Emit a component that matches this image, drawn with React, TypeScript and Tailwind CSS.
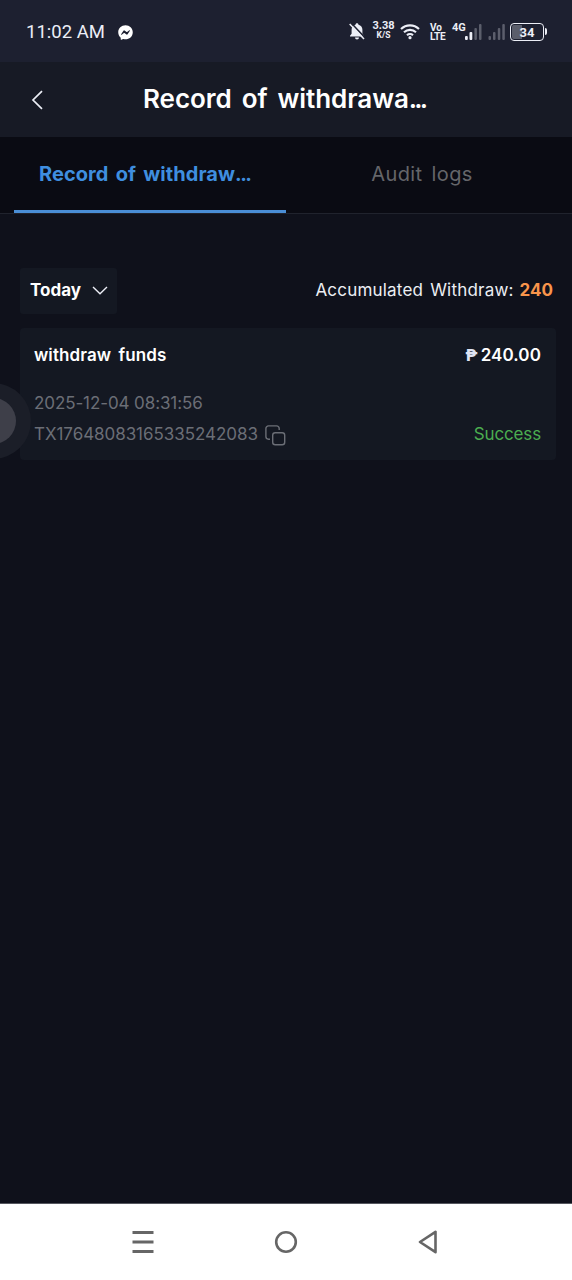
import { FaFacebookMessenger } from 'react-icons/fa';

const tabs = [
  { label: 'Record of withdraw', truncated: true, active: true },
  { label: 'Audit logs', truncated: false, active: false },
];

const records = [
  {
    title: 'withdraw funds',
    amount: '240.00',
    time: '2025-12-04 08:31:56',
    id: 'TX17648083165335242083',
    status: 'Success',
  },
];

const StatusBar = () => (
  <div className="h-[62px] bg-[#1d2030] flex items-start justify-between pl-[26px] pr-[25px] text-[#eceef6] font-['Roboto',sans-serif]">
    <div className="flex items-center h-[64px]">
      <span className="text-[18.5px] w-[92px] whitespace-nowrap pt-[2px]">11:02 AM</span>
      <FaFacebookMessenger className="w-[15px] h-[15px] text-white" />
    </div>

    <div className="flex items-center h-[63px]">
      {/* Muted bell */}
      <svg className="w-[16px] h-[17px] mr-[7px]" viewBox="0 0 16 17">
        <path d="M8 0.300c.9 0 1.500.6 1.500 1.500 2.500.6 3.900 2.500 3.900 4.900v4.100l1.600 1.900v.9H1v-.9l1.600-1.900V6.700c0-2.400 1.400-4.300 3.900-4.900C6.500.9 7.100.3 8 .3zM6 14.400h4a2 2 0 0 1-4 0z" fill="currentColor" />
        <path d="M1.900 -.3L16.200 14.900" stroke="#1d2030" strokeWidth="1.500" />
        <path d="M.7.9l14.300 15.200" stroke="currentColor" strokeWidth="1.500" />
      </svg>
      <div className="w-[23px] mr-[5px] mb-[2px] flex flex-col items-center font-bold">
        <span className="text-[11px] leading-[10px]">3.38</span>
        <span className="text-[8.5px] leading-[9px]">K/S</span>
      </div>
      {/* Wifi */}
      <svg className="w-[20px] h-[17px] mr-[10px]" viewBox="0 0 20 17" fill="none" stroke="currentColor" strokeWidth="2.100">
        <path d="M1 6.100a12.800 12.800 0 0 1 18 0" />
        <path d="M4 9.300a8.600 8.600 0 0 1 12 0" />
        <path d="M7 12.300a4.400 4.400 0 0 1 6 0" />
        <circle cx="10" cy="14.700" r="1.600" fill="currentColor" stroke="none" />
      </svg>
      <div className="w-[17px] mr-[5px] flex flex-col font-bold text-[10px] leading-[9px]">
        <span>Vo</span>
        <span className="tracking-[-0.3px]">LTE</span>
      </div>
      <span className="text-[11px] font-bold w-[13px] mb-[7px] leading-[10px]">4G</span>
      <svg className="w-[18px] h-[17px] mr-[5px]" viewBox="0 0 18 17" fill="currentColor">
        <rect x="0" y="13" width="2.800" height="4" rx="1" />
        <rect x="4.500" y="9" width="2.800" height="8" rx="1" />
        <rect x="9.400" y="5" width="2.500" height="12" rx="1" opacity=".3" />
        <rect x="14" y="1" width="2.500" height="16" rx="1" opacity=".3" />
      </svg>
      <svg className="w-[18px] h-[17px] mr-[4px]" viewBox="0 0 18 17" fill="currentColor" opacity=".3">
        <rect x="0.500" y="13" width="2.500" height="4" rx="1" />
        <rect x="5" y="9" width="2.500" height="8" rx="1" />
        <rect x="9.800" y="5" width="2.500" height="12" rx="1" />
        <rect x="14.300" y="1" width="2.500" height="16" rx="1" />
      </svg>
      <div className="w-[34px] h-[18px] rounded-[4px] border-[1.5px] border-[#eceef6] p-px flex">
        <div className="w-full rounded-[2px] bg-linear-to-r from-[#5b5e6b] from-34% to-transparent to-34% flex items-center justify-center">
          <span className="text-[13px] font-bold leading-none pt-px">34</span>
        </div>
      </div>
      <div className="w-[2px] h-[7px] ml-px bg-[#eceef6] rounded-r-sm" />
    </div>
  </div>
);

const CopyIcon = () => (
  <svg className="w-[21px] h-[21px]" viewBox="0 0 21 21" fill="none" stroke="#6b6e76" strokeWidth="1.400">
    <rect x="7.700" y="7.700" width="12" height="12" rx="2.500" />
    <path d="M5 14.200H3.500a2.600 2.600 0 0 1-2.600-2.600V3.500A2.600 2.600 0 0 1 3.500.900h8.100a2.600 2.600 0 0 1 2.600 2.600V5" />
  </svg>
);

export default function App() {
  return (
    <div className="relative w-[572px] h-[1280px] flex flex-col overflow-hidden bg-[#0f111b] text-white font-['Inter',sans-serif]">
      <StatusBar />

      <header className="h-[75px] bg-[#171a25] flex items-center pl-[31px]">
        <svg className="w-[12px] h-[20px]" viewBox="0 0 12 20" fill="none" stroke="#eceef6" strokeWidth="1.700">
          <path d="M11 1.200L2 10l9 8.800" />
        </svg>
        <h1 className="ml-[100px] mb-[3px] text-[26px] font-semibold tracking-[-0.05px] [word-spacing:3.5px] whitespace-nowrap">
          Record of withdrawa<span className="tracking-[-2.8px]">...</span>
        </h1>
      </header>

      <nav className="h-[77px] bg-[#0a0b13] border-b border-[#20232d] flex px-[14px]">
        {tabs.map((tab) => (
          <button
            key={tab.label}
            className={
              tab.active
                ? 'w-[272px] pl-[25px] text-left text-[20px] font-bold text-[#3f8edf] border-b-[3px] border-[#4a8ed6] whitespace-nowrap tracking-[0.05px] [word-spacing:2.5px]'
                : 'w-[272px] text-center text-[20px] text-[#65666a] border-b-[3px] border-transparent whitespace-nowrap tracking-[0.4px] [word-spacing:3px]'
            }
          >
            {tab.label}
            {tab.truncated && <span className="tracking-[-1.6px]">...</span>}
          </button>
        ))}
      </nav>

      <main className="flex-1 pt-[54px] pl-[20px] pr-[16px]">
        <div className="flex items-center justify-between h-[46px]">
          <button className="w-[97px] h-[46px] rounded-[3px] bg-[#141822] flex items-center justify-between pl-[10px] pr-[9px]">
            <span className="text-[17px] font-bold">Today</span>
            <svg className="w-[16px] h-[9px] mb-px" viewBox="0 0 16 9" fill="none" stroke="#eceef6" strokeWidth="1.400">
              <path d="M1 1l7 6.800L15 1" />
            </svg>
          </button>
          <p className="text-[17px] text-[#eceef3] mr-[3px] whitespace-nowrap tracking-[0.2px] [word-spacing:2px]">
            Accumulated Withdraw:<span className="font-bold text-[#f8954b] tracking-normal ml-[6px]">240</span>
          </p>
        </div>

        {records.map((record) => (
          <section key={record.id} className="mt-[14px] h-[132px] rounded-[4px] bg-[#141822] pl-[14px] pr-[15px] pt-[15px]">
            <div className="flex justify-between h-[26px] items-center text-[17px] font-semibold">
              <span className="tracking-[0.1px] [word-spacing:3px]">{record.title}</span>
              <span className="flex items-center gap-[3px]">
                <span className="text-[16px] font-black text-[#dfe3f3] font-['Roboto',sans-serif]">₱</span>
                <span className="tracking-[0.1px]">{record.amount}</span>
              </span>
            </div>
            <div className="mt-[22px] h-[26px] flex items-center text-[17px] text-[#6b6e76] tracking-[-0.1px]">
              {record.time}
            </div>
            <div className="mt-[5px] h-[26px] flex items-center justify-between text-[17px]">
              <span className="flex items-center gap-[8px] text-[#6b6e76]">
                <span className="w-[223px] whitespace-nowrap tracking-[-0.05px]">{record.id}</span>
                <CopyIcon />
              </span>
              <span className="text-[#4bad50] tracking-[-0.15px]">{record.status}</span>
            </div>
          </section>
        ))}
      </main>

      {/* Floating assistive button, half off the left edge */}
      <div className="absolute left-[-45px] top-[383px] w-[76px] h-[76px] rounded-full bg-[#1b1e28] flex items-center justify-center">
        <div className="w-[46px] h-[46px] rounded-full bg-[#3e3f49]" />
      </div>

      <footer className="h-[77px] bg-white border-t border-[#55575f] flex items-center justify-between pl-[132px] pr-[134px]">
        <svg className="w-[22px] h-[24px]" viewBox="0 0 22 24" fill="#666">
          <rect x="0.500" y="1" width="21" height="3" />
          <rect x="0.500" y="10.500" width="21" height="3" />
          <rect x="0.500" y="20" width="21" height="3" />
        </svg>
        <svg className="w-[24px] h-[24px]" viewBox="0 0 24 24" fill="none" stroke="#666" strokeWidth="2.600">
          <circle cx="12" cy="12" r="9.800" />
        </svg>
        <svg className="w-[20px] h-[24px]" viewBox="0 0 20 24" fill="none" stroke="#666" strokeWidth="2.600" strokeLinejoin="round">
          <path d="M17.500 1.800v20.400L2 12z" />
        </svg>
      </footer>
    </div>
  );
}
